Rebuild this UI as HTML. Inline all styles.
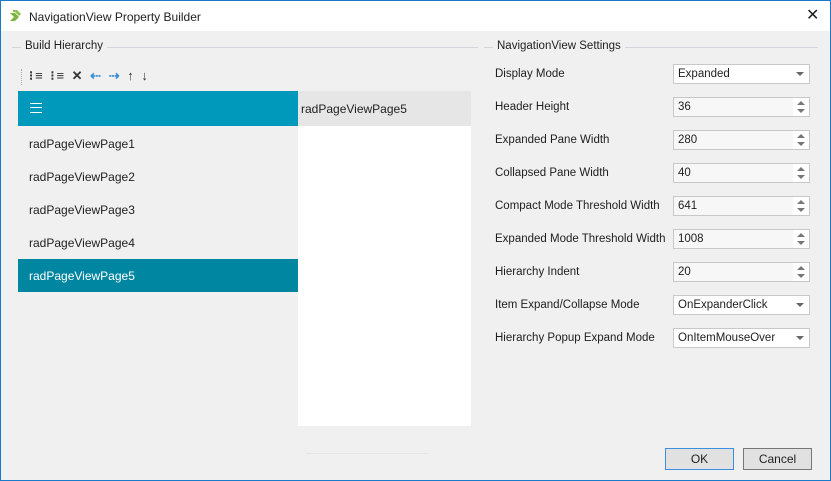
<!DOCTYPE html>
<html><head><style>
body{margin:0;width:831px;height:481px;overflow:hidden;font-family:"Liberation Sans",sans-serif;font-size:12px;color:#1e1e1e;}
.win{position:absolute;left:0;top:0;width:829px;height:479px;border:1px solid #1979ca;background:#f0f0f0;}
.abs{position:absolute;}
.title{left:0;top:0;width:829px;height:30px;background:#fff;}
.grp{height:1px;background:#d5d5dc;}
.lbl{position:absolute;background:#f0f0f0;padding:0 4px;font-size:11.5px;}
.row{position:absolute;left:17px;width:280px;height:33px;line-height:35px;padding-left:11px;box-sizing:border-box;font-size:12px;}
.fl{position:absolute;left:494px;font-size:11.5px;}
.inp{position:absolute;left:672px;width:137px;height:20px;border:1px solid #c8c8c8;background:#fff;box-sizing:border-box;font-size:11.5px;line-height:19px;padding-left:4px;}
.spin .s{position:absolute;right:0;top:0;width:16px;height:18px;background:#fff;}
.spin .s:before{content:"";position:absolute;left:4px;top:3px;border-left:4px solid transparent;border-right:4px solid transparent;border-bottom:4px solid #777;}
.spin .s:after{content:"";position:absolute;left:4px;top:11px;border-left:4px solid transparent;border-right:4px solid transparent;border-top:4px solid #777;}
.spin{background:#f7f7f7}
.dd .a{position:absolute;right:5px;top:7px;width:0;height:0;border-left:4px solid transparent;border-right:4px solid transparent;border-top:4px solid #666;}
.btn{position:absolute;top:447px;height:22px;line-height:20px;text-align:center;background:#e1e1e1;box-sizing:border-box;font-size:12px;}
</style></head><body>
<div class="win">
<div class="abs title"></div>
<svg class="abs" style="left:7px;top:8px" width="14" height="14" viewBox="0 0 14 14"><path d="M2 4h5l4 4-4 4H2l4-4z" fill="#7cb342"/><path d="M5 1h4l4 4-2 2-4-4H5z" fill="#8bc34a"/></svg>
<div class="abs" style="left:28px;top:9px;font-size:12px">NavigationView Property Builder</div>
<div class="abs" style="left:805px;top:4px;font-size:16px">✕</div>

<div class="abs grp" style="left:11px;top:46px;width:466px"></div>
<div class="lbl" style="left:20px;top:39px">Build Hierarchy</div>
<div class="abs grp" style="left:483px;top:46px;width:334px"></div>
<div class="lbl" style="left:492px;top:39px">NavigationView Settings</div>

<div class="abs" style="left:20px;top:68px;width:2px;height:16px;border-left:1px dotted #aaa"></div>
<div class="abs" style="left:28px;top:67px;font-size:13px;font-weight:bold;letter-spacing:2px;color:#333">⁝≡ ⁝≡ ✕ <span style="color:#3a8fd6">⇠</span> <span style="color:#3a8fd6">⇢</span> ↑ ↓</div>

<div class="abs" style="left:17px;top:90px;width:280px;height:35px;background:#0099bc"></div>
<div class="abs" style="left:29px;top:102px;width:12px;height:10px;border-top:1px solid #fff;border-bottom:1px solid #fff;box-sizing:border-box"></div>
<div class="abs" style="left:29px;top:106px;width:12px;height:1px;background:#fff"></div>
<div class="abs" style="left:297px;top:90px;width:173px;height:35px;background:#e6e6e6;line-height:37px;padding-left:3px;box-sizing:border-box">radPageViewPage5</div>
<div class="abs" style="left:297px;top:125px;width:173px;height:300px;background:#fff"></div>
<div class="row" style="top:126px">radPageViewPage1</div>
<div class="row" style="top:159px">radPageViewPage2</div>
<div class="row" style="top:192px">radPageViewPage3</div>
<div class="row" style="top:225px">radPageViewPage4</div>
<div class="row" style="top:258px;background:#0086a0;color:#fff">radPageViewPage5</div>
<div class="abs" style="left:305px;top:452px;width:122px;height:1px;background:#e4e4e4"></div>

<div class="fl" style="top:67px">Display Mode</div>
<div class="inp dd" style="top:63px">Expanded<div class="a"></div></div>
<div class="fl" style="top:100px">Header Height</div>
<div class="inp spin" style="top:96px">36<div class="s"></div></div>
<div class="fl" style="top:133px">Expanded Pane Width</div>
<div class="inp spin" style="top:129px">280<div class="s"></div></div>
<div class="fl" style="top:166px">Collapsed Pane Width</div>
<div class="inp spin" style="top:162px">40<div class="s"></div></div>
<div class="fl" style="top:199px">Compact Mode Threshold Width</div>
<div class="inp spin" style="top:195px">641<div class="s"></div></div>
<div class="fl" style="top:232px">Expanded Mode Threshold Width</div>
<div class="inp spin" style="top:228px">1008<div class="s"></div></div>
<div class="fl" style="top:265px">Hierarchy Indent</div>
<div class="inp spin" style="top:261px">20<div class="s"></div></div>
<div class="fl" style="top:298px">Item Expand/Collapse Mode</div>
<div class="inp dd" style="top:294px">OnExpanderClick<div class="a"></div></div>
<div class="fl" style="top:331px">Hierarchy Popup Expand Mode</div>
<div class="inp dd" style="top:327px">OnItemMouseOver<div class="a"></div></div>

<div class="btn" style="left:664px;width:69px;border:1px solid #3c8ee0">OK</div>
<div class="btn" style="left:742px;width:69px;border:1px solid #777">Cancel</div>
</div>
</body></html>
